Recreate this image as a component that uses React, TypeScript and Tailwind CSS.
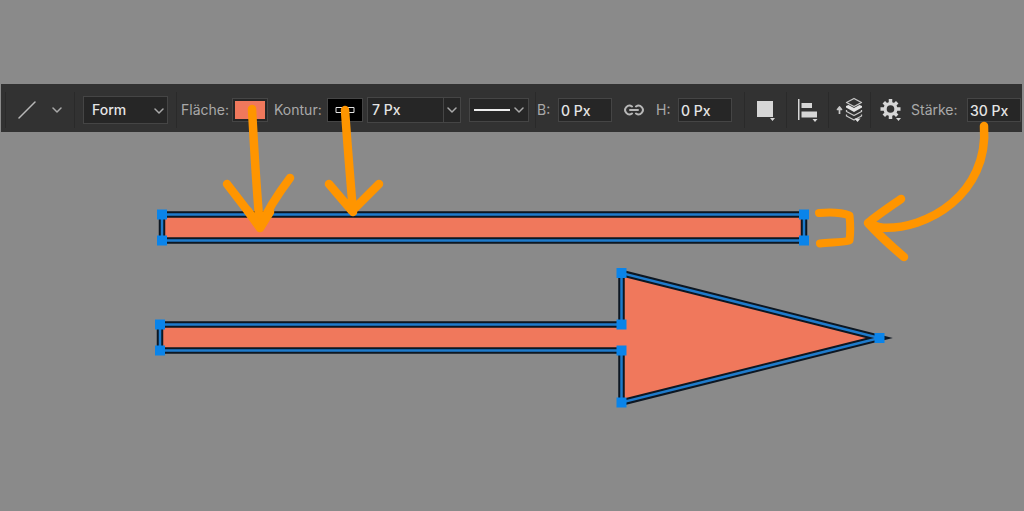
import type { ReactNode } from "react"

const COLORS = {
  fill: "#f0785c",
  path: "#1f7bcb",
  anchor: "#0a84ea",
  marker: "#ff9500",
}

function Chevron({ className }: { className?: string }) {
  return (
    <svg className={className} width="10" height="6" viewBox="0 0 10 6" fill="none" stroke="currentColor" strokeWidth="1.5" strokeLinecap="round" strokeLinejoin="round" aria-hidden="true">
      <path d="M1 1l4 4 4-4" />
    </svg>
  )
}

function Separator() {
  return <div className="h-9 w-px shrink-0 bg-[#2a2a2a]" />
}

function ToolButton({ label, className = "", children }: { label: string; className?: string; children: ReactNode }) {
  return (
    <button type="button" aria-label={label} className={`flex h-9 shrink-0 items-center justify-center ${className}`}>
      {children}
    </button>
  )
}

function SizeField({ id, value }: { id: string; value: string }) {
  return (
    <input
      id={id}
      defaultValue={value}
      className="h-6 w-[54px] shrink-0 border border-[#454545] bg-[#262626] pl-0.5 font-medium text-[#e4e4e4] outline-none"
    />
  )
}

function OptionsBar() {
  return (
    <div className="flex h-12 items-center overflow-hidden bg-[#323232] pt-1 pl-1 text-sm text-[#a9a9a9]">
      <Separator />
      <ToolButton label="Linienzeichner" className="w-[68px] gap-4">
        <svg width="18" height="18" viewBox="0 0 18 18" stroke="#b8b8b8" strokeWidth="1.5" strokeLinecap="round" aria-hidden="true">
          <path d="M1 17L17 1" />
        </svg>
        <Chevron />
      </ToolButton>
      <Separator />

      <div className="relative mx-2 shrink-0">
        <select aria-label="Werkzeugmodus" className="h-7 w-[85px] appearance-none border border-[#454545] bg-[#262626] pl-2 font-medium text-[#e4e4e4] outline-none">
          <option>Form</option>
          <option>Pfad</option>
          <option>Pixel</option>
        </select>
        <Chevron className="pointer-events-none absolute top-3 right-1" />
      </div>
      <Separator />

      <label htmlFor="fill" className="ml-1 w-[51px] shrink-0">Fläche:</label>
      <button id="fill" type="button" className="h-6 w-9 shrink-0 border border-[#454545] bg-[#262626] p-0.5">
        <span className="block h-full bg-[#f0785c]" />
      </button>
      <label htmlFor="stroke" className="ml-1.5 w-[53px] shrink-0">Kontur:</label>
      <button id="stroke" type="button" className="flex h-6 w-9 shrink-0 items-center justify-center border border-[#454545] bg-black">
        <svg width="20" height="8" viewBox="0 0 20 8" fill="none" stroke="#e4e4e4" aria-hidden="true">
          <path d="M1 1.5h18v5H1zM6 4h8" />
        </svg>
      </button>

      <div className="ml-1 flex h-[26px] w-[94px] shrink-0 border border-[#454545] bg-[#262626]">
        <input aria-label="Konturbreite" defaultValue="7 Px" className="w-[75px] pl-1 font-medium text-[#e4e4e4] outline-none" />
        <button type="button" aria-label="Konturbreite wählen" className="flex flex-1 items-center justify-center border-l border-[#454545]">
          <Chevron />
        </button>
      </div>
      <button type="button" aria-label="Konturart" className="ml-2 flex h-6 w-[60px] shrink-0 items-center justify-between border border-[#454545] bg-[#262626] px-1">
        <span className="h-0.5 w-9 bg-[#ececec]" />
        <Chevron />
      </button>
      <div className="w-1.5 shrink-0" />
      <Separator />

      <label htmlFor="width" className="w-[22px] shrink-0 pl-px">B:</label>
      <SizeField id="width" value="0 Px" />
      <ToolButton label="Breite und Höhe verbinden" className="w-[44px]">
        <svg width="22" height="12" viewBox="0 0 22 12" fill="none" stroke="#b8b8b8" strokeWidth="2" strokeLinecap="round" aria-hidden="true">
          <path d="M9 2.5A4.3 4.3 0 1 0 9 9.5M13 2.5a4.3 4.3 0 1 1 0 7M7 6h8" />
        </svg>
      </ToolButton>
      <label htmlFor="height" className="w-[22px] shrink-0">H:</label>
      <SizeField id="height" value="0 Px" />
      <div className="w-3 shrink-0" />
      <Separator />

      <ToolButton label="Pfadvorgänge" className="w-[41px]">
        <svg width="20" height="22" viewBox="0 0 20 22" fill="#d6d6d6" aria-hidden="true">
          <path d="M1 2h16v16H1zM14 19h5l-2.500 3z" />
        </svg>
      </ToolButton>
      <Separator />
      <ToolButton label="Pfadausrichtung" className="w-[41px]">
        <svg width="20" height="24" viewBox="0 0 20 24" fill="#d6d6d6" aria-hidden="true">
          <path d="M0 1h1.500v21H0zM3.500 5h10.500v5H3.500zM3.500 13.500H19v6H3.500zM14.500 21h5L17 24z" />
        </svg>
      </ToolButton>
      <Separator />
      <ToolButton label="Pfadanordnung" className="w-[41px]">
        <svg width="28" height="26" viewBox="0 0 28 26" fill="none" stroke="#c8c8c8" strokeWidth="1.300" strokeLinejoin="round" aria-hidden="true">
          <path d="M3.500 17V11M1.500 12.500l2-2.500 2 2.500z" strokeWidth="1.700" />
          <path d="M18 1.500l7.500 4-7.500 4-7.500-4z" />
          <path d="M10 9l2.500-1L18 11l5.500-3L26 9v1.500L18 15l-8-4.500z" fill="#e4e4e4" stroke="none" />
          <path d="M10.500 13v1.500l7.500 4 7.500-4V13M10.500 17.500V19l7.500 4 7.500-4v-1.500" />
          <path d="M18.500 21.500h6L21.500 25z" fill="#e4e4e4" stroke="none" />
        </svg>
      </ToolButton>
      <Separator />
      <ToolButton label="Pfadoptionen" className="w-[40px]">
        <svg width="22" height="24" viewBox="0 0 22 24" aria-hidden="true">
          <g stroke="#d6d6d6" strokeWidth="3.500">
            <path d="M10.500 1v20M.5 11h20M3.800 4.300l13.400 13.400M17.200 4.300L3.800 17.700" />
          </g>
          <circle cx="10.500" cy="11" r="7" fill="#d6d6d6" />
          <circle cx="10.500" cy="11" r="3.800" fill="#323232" />
          <path d="M16 20h5l-2.500 3z" fill="#d6d6d6" />
        </svg>
      </ToolButton>

      <label htmlFor="weight" className="w-14 shrink-0">Stärke:</label>
      <SizeField id="weight" value="30 Px" />
    </div>
  )
}

function Shape({ points }: { points: number[][] }) {
  const outline = points.map((p) => p.join(",")).join(" ")
  return (
    <g strokeMiterlimit="10">
      <polygon points={outline} fill={COLORS.fill} stroke="#0d1722" strokeWidth="6.5" />
      <polygon points={outline} fill="none" stroke={COLORS.path} strokeWidth="2.5" />
      {points.map(([x, y]) => (
        <rect key={`${x}-${y}`} x={x - 5} y={y - 5} width="10" height="10" fill={COLORS.anchor} />
      ))}
    </g>
  )
}

function Canvas() {
  return (
    <svg className="block w-full" viewBox="0 0 1024 379" role="img" aria-label="Linie und Pfeil">
      <Shape points={[[162, 82.5], [804, 82.5], [804, 108.5], [162, 108.5]]} />
      <Shape points={[[160, 192.5], [621.5, 192.5], [621.5, 141], [879.5, 206], [621.5, 270.5], [621.5, 218.5], [160, 218.5]]} />
    </svg>
  )
}

// Hand-drawn arrows pointing from the options to the shapes
function Annotations() {
  return (
    <svg
      className="pointer-events-none absolute inset-x-0 top-0 w-full"
      viewBox="0 0 1024 511"
      fill="none"
      stroke={COLORS.marker}
      strokeWidth="8.5"
      strokeLinecap="round"
      strokeLinejoin="round"
      aria-hidden="true"
    >
      <path d="M252 109C254 145 256 185 260 227M227 184L260 227C268 209 278 194 290 178" />
      <path d="M248 211l12 17 10-16" />
      <path d="M345 110C347 140 350 175 353 212M329 184L352 211L379 184" />
      <path d="M984 126C989 194 927 231 880 227.500" />
      <path d="M901 199C888 208 876 216 868 223C880 236 891 246 904 257M870 224L882 228" />
      <path d="M819 213C830 212 843 213 849.500 215.500C850.500 225 850.500 233 849.500 240.500C840 243 830 242 820 243.500" strokeWidth="8" />
    </svg>
  )
}

export default function App() {
  return (
    <div className="relative min-h-screen overflow-hidden bg-[#8a8a8a] pt-[84px] font-['Inter','Liberation_Sans',sans-serif]">
      <div className="mr-0.5 ml-px">
        <OptionsBar />
      </div>
      <Canvas />
      <Annotations />
    </div>
  )
}
